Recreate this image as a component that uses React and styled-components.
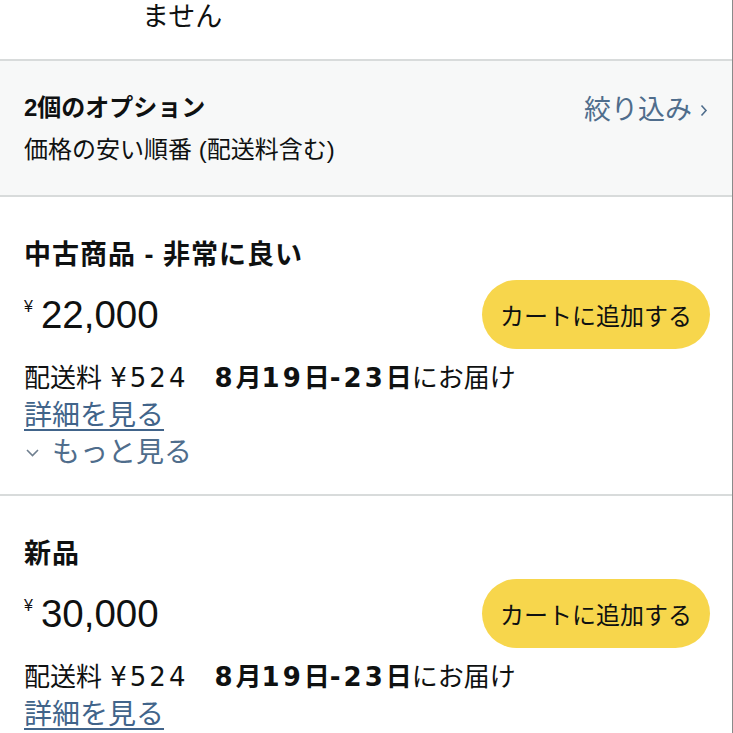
import React from 'react';
import styled, { createGlobalStyle } from 'styled-components';

const GlobalStyle = createGlobalStyle`
  html, body {
    margin: 0;
    padding: 0;
    background: #ffffff;
  }

  body {
    font-family: "Liberation Sans", "Noto Sans CJK JP", sans-serif;
    color: #0f1111;
  }
`;

const Page = styled.div`
  width: 733px;
  height: 733px;
  overflow: hidden;
  box-sizing: border-box;
  border-right: 1px solid #8a8a8a;
  display: flex;
  flex-direction: column;
`;

const TopNote = styled.div`
  height: 61px;
  padding-left: 142px;
  font-size: 27px;
  line-height: 34px;
  color: #0f1111;
  border-bottom: 2px solid #d8dbdb;
  box-sizing: border-box;
  flex-shrink: 0;
`;

const OptionsBar = styled.div`
  height: 136px;
  box-sizing: border-box;
  background: #f7f8f8;
  border-bottom: 2px solid #d8dbdb;
  padding: 30px 24px 0 24px;
  display: flex;
  justify-content: space-between;
  align-items: flex-start;
  flex-shrink: 0;
`;

const OptionsText = styled.div`
  display: flex;
  flex-direction: column;
  gap: 8px;
`;

const OptionsTitle = styled.div`
  font-size: 24px;
  font-weight: 700;
  line-height: 34px;
`;

const OptionsSub = styled.div`
  font-size: 24px;
  line-height: 34px;
`;

const FilterLink = styled.a`
  display: flex;
  align-items: center;
  gap: 8px;
  margin-top: 2px;
  font-size: 27px;
  line-height: 34px;
  color: #4f6d8c;
  text-decoration: none;
`;

const Offer = styled.section`
  padding: 40px 22px 22px 24px;
  border-bottom: ${({ $last }) => ($last ? 'none' : '2px solid #d8dbdb')};
  flex-shrink: 0;
`;

const OfferTitle = styled.div`
  font-size: 27px;
  font-weight: 700;
  line-height: 36px;
  letter-spacing: 1px;
`;

const PriceRow = styled.div`
  display: flex;
  justify-content: space-between;
  align-items: center;
  margin-top: 7px;
`;

const Price = styled.div`
  display: flex;
  align-items: flex-start;
  font-size: 38.5px;
  line-height: 44px;
  font-weight: 400;
  color: #0f1111;
`;

const Yen = styled.span`
  font-size: 16px;
  line-height: 24px;
  margin-top: 2px;
  margin-right: 8px;
`;

const CartButton = styled.button`
  height: 69px;
  padding: 0 18px;
  border: none;
  border-radius: 35px;
  background: #f7d64c;
  font-family: "Liberation Sans", "Noto Sans CJK JP", sans-serif;
  font-size: 24px;
  color: #0f1111;
  cursor: pointer;
`;

const Shipping = styled.div`
  margin-top: 11px;
  font-family: "DejaVu Sans", "Noto Sans CJK JP", sans-serif;
  font-size: 26px;
  line-height: 36px;
  white-space: nowrap;
`;

const Num = styled.span`
  letter-spacing: 3px;
`;

const Delivery = styled.b`
  font-weight: 700;
  margin-left: 26px;
`;

const DetailLink = styled.a`
  display: inline-block;
  margin-top: 2px;
  font-size: 28px;
  line-height: 36px;
  color: #41648a;
  text-decoration: underline;
  text-underline-offset: 4px;
  text-decoration-thickness: 1.5px;
`;

const MoreLink = styled.a`
  display: flex;
  align-items: center;
  gap: 13px;
  font-size: 28px;
  line-height: 38px;
  color: #4f6d8c;
  padding-left: 2px;
`;

const ChevronRight = () => (
  <svg width="8" height="13" viewBox="0 0 8 13" fill="none">
    <path d="M1.5 1.5L6 6.5L1.5 11.5" stroke="#4f6d8c" strokeWidth="1.6" />
  </svg>
);

const ChevronDown = () => (
  <svg width="13" height="8" viewBox="0 0 13 8" fill="none">
    <path d="M1 1L6.5 6.5L12 1" stroke="#6f7f8f" strokeWidth="1.6" />
  </svg>
);

const offers = [
  { title: '中古商品 - 非常に良い', price: '22,000', more: true },
  { title: '新品', price: '30,000', more: false },
];

const App = () => (
  <>
    <GlobalStyle />
    <Page>
      <TopNote>ません</TopNote>
      <OptionsBar>
        <OptionsText>
          <OptionsTitle>2個のオプション</OptionsTitle>
          <OptionsSub>価格の安い順番 (配送料含む)</OptionsSub>
        </OptionsText>
        <FilterLink>
          絞り込み
          <ChevronRight />
        </FilterLink>
      </OptionsBar>
      {offers.map((o, i) => (
        <Offer key={o.title} $last={i === offers.length - 1}>
          <OfferTitle>{o.title}</OfferTitle>
          <PriceRow>
            <Price>
              <Yen>¥</Yen>
              {o.price}
            </Price>
            <CartButton>カートに追加する</CartButton>
          </PriceRow>
          <Shipping>
            配送料 <Num>¥524</Num>
            <Delivery>
              <Num>8</Num>月<Num>19</Num>日<Num>-23</Num>日
            </Delivery>
            にお届け
          </Shipping>
          <DetailLink>詳細を見る</DetailLink>
          {o.more && (
            <MoreLink>
              <ChevronDown />
              もっと見る
            </MoreLink>
          )}
        </Offer>
      ))}
    </Page>
  </>
);

export default App;
